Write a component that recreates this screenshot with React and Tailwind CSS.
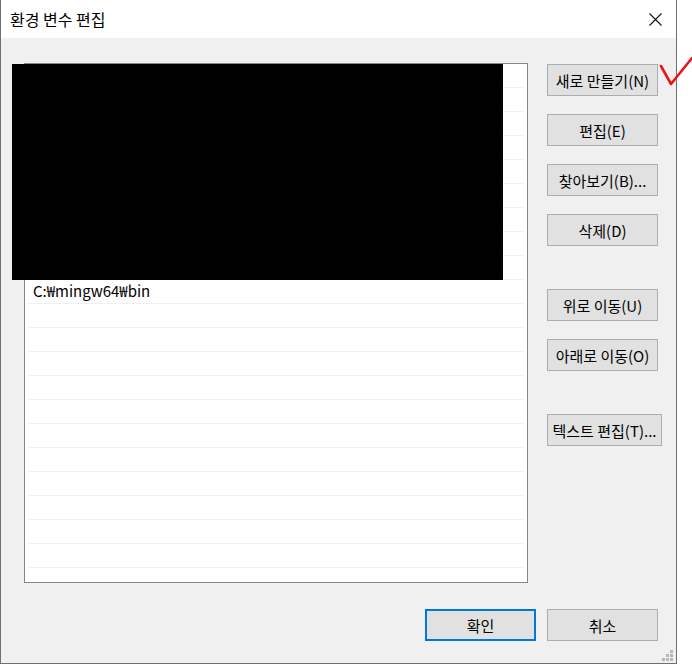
const font = { fontFamily: '"Noto Sans CJK KR", "Noto Sans", sans-serif' };

function Btn({ children, className = '', primary = false }) {
    return (
        <button
            className={`flex h-[32px] items-center justify-center whitespace-nowrap bg-[#e1e1e1] text-[15px] leading-none text-black ${
                primary ? 'border-2 border-[#0078d7]' : 'border border-[#adadad]'
            } ${className}`}
        >
            {children}
        </button>
    );
}

export default function App() {
    const rows = Array.from({ length: 22 });
    return (
        <div className="relative h-[664px] w-[692px] bg-white" style={font}>
            <div className="flex h-[664px] w-[677px] flex-col border-x border-b border-[#707070]">
                {/* title bar */}
                <div className="flex h-[38px] shrink-0 items-center justify-between bg-white pl-[9px] pr-[14px]">
                    <span className="text-[16px] text-black">환경 변수 편집</span>
                    <svg width="13" height="13" viewBox="0 0 13 13">
                        <path d="M0.5 0.5 L12.5 12.5 M12.5 0.5 L0.5 12.5" stroke="#111" strokeWidth="1.1" />
                    </svg>
                </div>

                <div className="relative flex flex-1 flex-col bg-[#f0f0f0]">
                    <div className="flex pl-[23px] pt-[25px]">
                        <div className="h-[520px] w-[504px] overflow-hidden border border-[#828790] bg-white">
                            {rows.map((_, i) => (
                                <div key={i} className="flex h-[24px] items-center px-[2px]">
                                    <div className="flex h-full w-full items-center border-b border-[#f0f0f0] pl-[6px] text-[15px] text-black">
                                        {i === 9 ? 'C:₩mingw64₩bin' : ''}
                                    </div>
                                </div>
                            ))}
                        </div>
                        <div className="ml-[19px] mt-px flex flex-col">
                            <Btn className="w-[111px]">새로 만들기(N)</Btn>
                            <Btn className="mt-[18px] w-[111px]">편집(E)</Btn>
                            <Btn className="mt-[18px] w-[111px]">찾아보기(B)...</Btn>
                            <Btn className="mt-[18px] w-[111px]">삭제(D)</Btn>
                            <Btn className="mt-[43px] w-[111px]">위로 이동(U)</Btn>
                            <Btn className="mt-[18px] w-[111px]">아래로 이동(O)</Btn>
                            <Btn className="mt-[43px] w-[115px]">텍스트 편집(T)...</Btn>
                        </div>
                    </div>

                    <div className="mt-[26px] flex justify-end gap-[11px] pr-[18px]">
                        <Btn primary className="w-[111px]">확인</Btn>
                        <Btn className="w-[111px]">취소</Btn>
                    </div>

                    {/* redaction block */}
                    <div className="absolute left-[11px] top-[26px] h-[216px] w-[491px] bg-black" />

                    {/* resize grip */}
                    <svg className="absolute bottom-[1px] right-[2px]" width="12" height="12" viewBox="0 0 12 12">
                        <g fill="#b8b8b8">
                            <rect x="8" y="0" width="3" height="3" />
                            <rect x="4" y="4" width="3" height="3" />
                            <rect x="8" y="4" width="3" height="3" />
                            <rect x="0" y="8" width="3" height="3" />
                            <rect x="4" y="8" width="3" height="3" />
                            <rect x="8" y="8" width="3" height="3" />
                        </g>
                    </svg>
                </div>
            </div>

            {/* red check mark */}
            <svg className="absolute left-[658px] top-[56px]" width="34" height="32" viewBox="0 0 34 32">
                <path d="M3 10 L13 28 L34 2" fill="none" stroke="#e8151b" strokeWidth="2.6" strokeLinejoin="round" strokeLinecap="round" />
            </svg>
        </div>
    );
}
